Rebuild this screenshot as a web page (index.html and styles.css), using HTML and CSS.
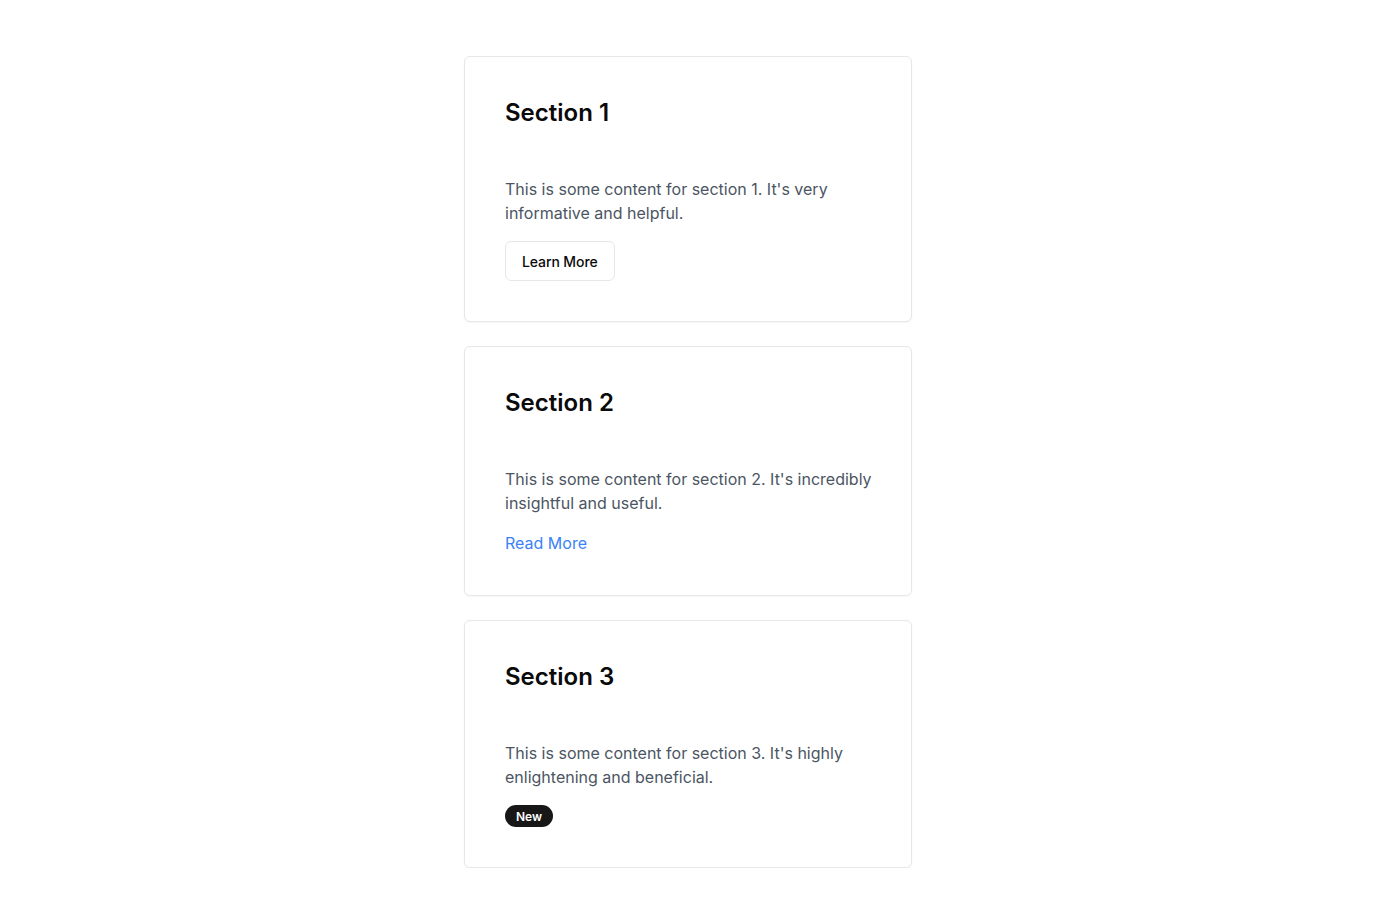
FILE: index.html
```html
<!DOCTYPE html>
<html lang="en">
<head>
<meta charset="utf-8">
<title>Sections</title>
<link rel="stylesheet" href="styles.css">
</head>
<body>
<main class="stack">
  <section class="card">
    <h2 class="card-title">Section 1</h2>
    <p class="card-text">This is some content for section 1. It's very informative and helpful.</p>
    <div class="card-action"><button class="btn-outline" type="button">Learn More</button></div>
  </section>
  <section class="card">
    <h2 class="card-title">Section 2</h2>
    <p class="card-text">This is some content for section 2. It's incredibly insightful and useful.</p>
    <div class="card-action"><a class="link" href="#">Read More</a></div>
  </section>
  <section class="card">
    <h2 class="card-title">Section 3</h2>
    <p class="card-text">This is some content for section 3. It's highly enlightening and beneficial.</p>
    <div class="card-action"><span class="badge">New</span></div>
  </section>
</main>
</body>
</html>
```
FILE: styles.css
```css
* { box-sizing: border-box; }
html, body { margin: 0; padding: 0; background: #ffffff; }
body {
  font-family: Inter, "Noto Sans", sans-serif;
  color: #0a0a0a;
  -webkit-font-smoothing: antialiased;
}
.stack {
  width: 448px;
  margin: 56px auto 0;
  display: flex;
  flex-direction: column;
  gap: 24px;
}
.card {
  border: 1px solid #e5e7eb;
  border-radius: 6px;
  padding: 40px 34px 40px 40px;
  background: #fff;
  box-shadow: 0 1px 2px rgba(0,0,0,0.04);
}
.card-title {
  margin: 0 0 48px;
  font-size: 24px;
  line-height: 32px;
  font-weight: 600;
  color: #0a0a0a;
}
.card-text {
  margin: 0;
  font-size: 16px;
  line-height: 24px;
  color: #4b5563;
}
.card-action {
  margin-top: 16px;
  display: flex;
}
.btn-outline {
  height: 40px;
  padding: 0 16px;
  border: 1px solid #e5e7eb;
  border-radius: 6px;
  background: #fff;
  font-family: inherit;
  font-size: 14px;
  font-weight: 500;
  letter-spacing: -0.1px;
  color: #0a0a0a;
  cursor: pointer;
}
.link {
  font-size: 16px;
  line-height: 24px;
  color: #3b82f6;
  text-decoration: none;
}
.badge {
  display: inline-flex;
  align-items: center;
  height: 22px;
  padding: 0 11px;
  border-radius: 999px;
  background: #171717;
  color: #fff;
  font-size: 12px;
  font-weight: 600;
}
```
